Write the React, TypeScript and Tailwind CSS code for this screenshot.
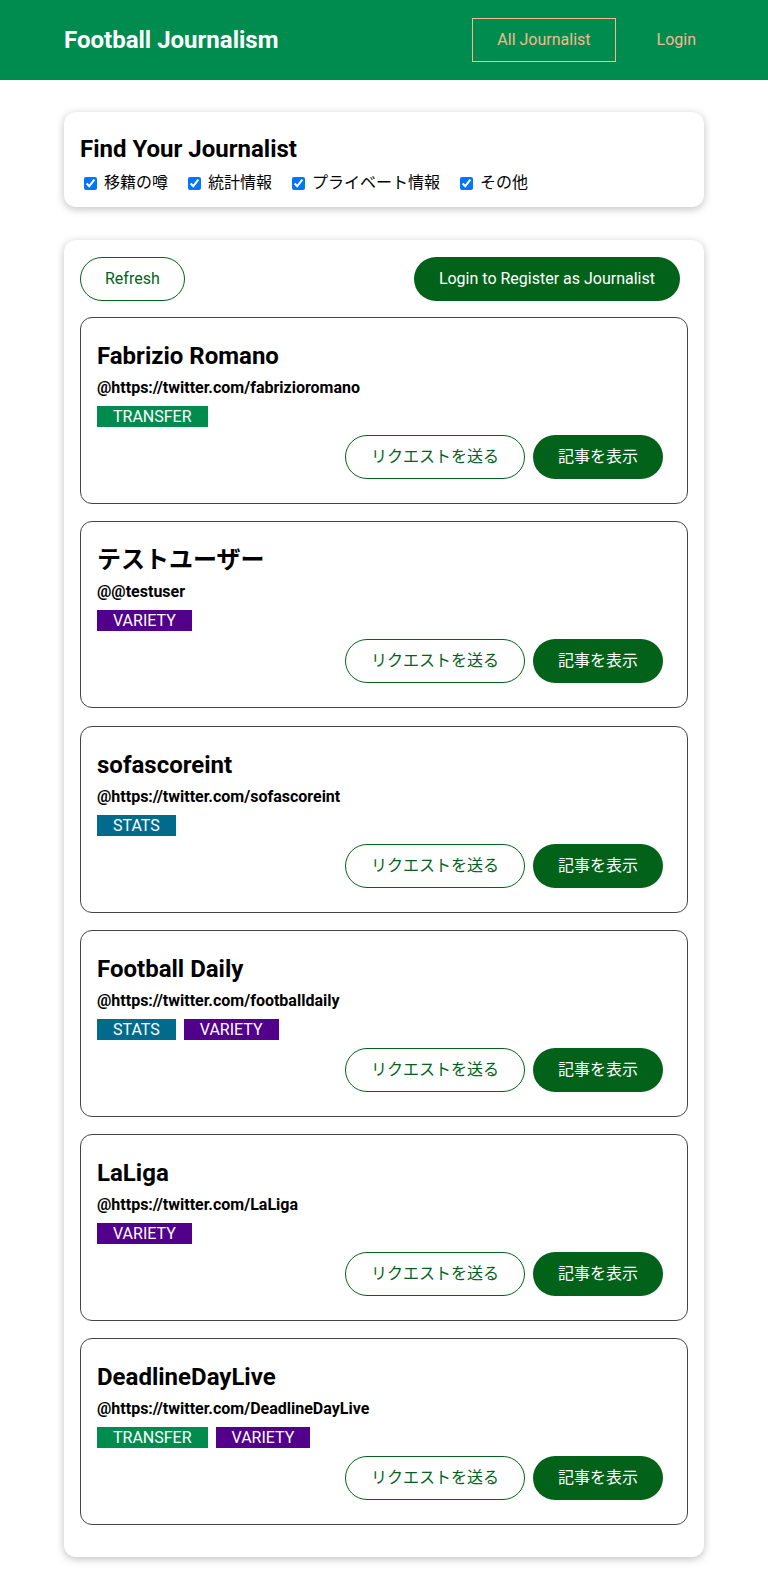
import React from 'react';

const FONT = "font-['Roboto','Noto_Sans_CJK_JP',sans-serif]";

type Tag = 'TRANSFER' | 'STATS' | 'VARIETY';

const tagColors: Record<Tag, string> = {
  TRANSFER: 'bg-[#008c4f]',
  STATS: 'bg-[#006b8c]',
  VARIETY: 'bg-[#52008c]',
};

const journalists: { name: string; handle: string; tags: Tag[] }[] = [
  { name: 'Fabrizio Romano', handle: '@https://twitter.com/fabrizioromano', tags: ['TRANSFER'] },
  { name: 'テストユーザー', handle: '@@testuser', tags: ['VARIETY'] },
  { name: 'sofascoreint', handle: '@https://twitter.com/sofascoreint', tags: ['STATS'] },
  { name: 'Football Daily', handle: '@https://twitter.com/footballdaily', tags: ['STATS', 'VARIETY'] },
  { name: 'LaLiga', handle: '@https://twitter.com/LaLiga', tags: ['VARIETY'] },
  { name: 'DeadlineDayLive', handle: '@https://twitter.com/DeadlineDayLive', tags: ['TRANSFER', 'VARIETY'] },
];

const filters = ['移籍の噂', '統計情報', 'プライベート情報', 'その他'];

const App = () => {
  return (
    <div className={`${FONT} min-h-[1590px] bg-white text-black`}>
      <header className="h-20 bg-[#008c4f] flex items-center justify-between pl-16 pr-12">
        <h1 className="text-2xl font-bold text-white">Football Journalism</h1>
        <nav className="flex items-center gap-[17px]">
          <button className="h-11 px-6 border border-[#f4b98e] text-[#f4b98e] text-base">All Journalist</button>
          <button className="h-11 px-6 text-[#f4b98e] text-base">Login</button>
        </nav>
      </header>

      <main className="w-[640px] mx-auto pt-8 pb-8">
        <section className="rounded-xl bg-white shadow-[0_2px_8px_rgba(0,0,0,0.25)] px-4 pt-[21px] pb-3">
          <h2 className="text-2xl font-bold leading-8">Find Your Journalist</h2>
          <div className="flex items-center gap-5 mt-[6px] pl-1">
            {filters.map((f) => (
              <label key={f} className="flex items-center gap-[7px] text-base leading-6">
                <input type="checkbox" defaultChecked className="w-[13px] h-[13px] accent-[#0075ff]" />
                {f}
              </label>
            ))}
          </div>
        </section>

        <section className="mt-[33px] rounded-xl bg-white shadow-[0_2px_8px_rgba(0,0,0,0.25)] px-4 pt-[17px] pb-8">
          <div className="flex justify-between items-center pr-2">
            <button className="h-11 px-6 rounded-full border border-[#03621a] text-[#03621a] text-base">Refresh</button>
            <button className="h-11 px-[25px] rounded-full bg-[#03621a] text-white text-base">Login to Register as Journalist</button>
          </div>

          <div className="mt-4 flex flex-col gap-[17.3px]">
            {journalists.map((j) => (
              <div key={j.name} className="rounded-xl border border-[#444] pl-4 pr-6 pt-[22px] pb-6">
                <h3 className="text-2xl font-bold leading-8">{j.name}</h3>
                <p className="text-base font-bold leading-6 mt-1">{j.handle}</p>
                <div className="flex gap-2 mt-[6px]">
                  {j.tags.map((t) => (
                    <span key={t} className={`${tagColors[t]} text-white text-base leading-[21px] px-4`}>{t}</span>
                  ))}
                </div>
                <div className="flex justify-end gap-2 mt-2">
                  <button className="h-11 px-[25px] rounded-full border border-[#03621a] text-[#03621a] text-base">リクエストを送る</button>
                  <button className="h-11 px-[25px] rounded-full bg-[#03621a] text-white text-base">記事を表示</button>
                </div>
              </div>
            ))}
          </div>
        </section>
      </main>
    </div>
  );
};

export default App;
